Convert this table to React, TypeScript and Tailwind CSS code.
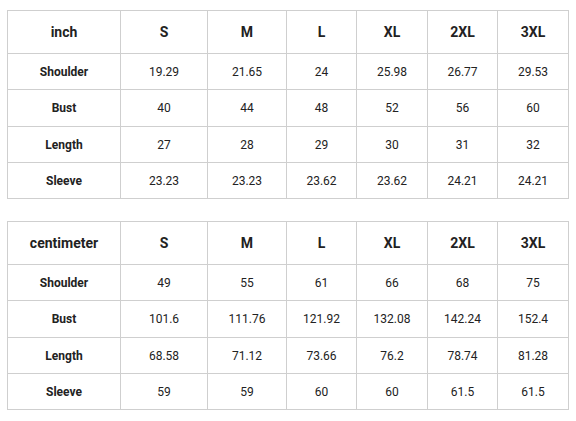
import React from "react";

const sizes = ["S", "M", "L", "XL", "2XL", "3XL"];

const inchRows: [string, string[]][] = [
  ["Shoulder", ["19.29", "21.65", "24", "25.98", "26.77", "29.53"]],
  ["Bust", ["40", "44", "48", "52", "56", "60"]],
  ["Length", ["27", "28", "29", "30", "31", "32"]],
  ["Sleeve", ["23.23", "23.23", "23.62", "23.62", "24.21", "24.21"]],
];

const cmRows: [string, string[]][] = [
  ["Shoulder", ["49", "55", "61", "66", "68", "75"]],
  ["Bust", ["101.6", "111.76", "121.92", "132.08", "142.24", "152.4"]],
  ["Length", ["68.58", "71.12", "73.66", "76.2", "78.74", "81.28"]],
  ["Sleeve", ["59", "59", "60", "60", "61.5", "61.5"]],
];

const rowHeights = ["h-[36px]", "h-[37px]", "h-[36px]", "h-[36px]"];

function SizeTable({ unit, rows }: { unit: string; rows: [string, string[]][] }) {
  return (
    <table className="border-collapse table-fixed w-[561px] text-[#222]">
      <colgroup>
        <col className="w-[113px]" />
        <col className="w-[87px]" />
        <col className="w-[79px]" />
        <col className="w-[70px]" />
        <col className="w-[71px]" />
        <col className="w-[70px]" />
        <col className="w-[71px]" />
      </colgroup>
      <thead>
        <tr className="h-[43px]">
          <th className="border border-[#cfcfcf] text-[14px] font-bold text-center">{unit}</th>
          {sizes.map((s) => (
            <th key={s} className="border border-[#cfcfcf] text-[14px] font-bold text-center">
              {s}
            </th>
          ))}
        </tr>
      </thead>
      <tbody>
        {rows.map(([label, vals], i) => (
          <tr key={label} className={rowHeights[i]}>
            <td className="border border-[#cfcfcf] text-[12px] font-bold text-center">{label}</td>
            {vals.map((v, j) => (
              <td key={j} className="border border-[#cfcfcf] text-[12px] text-center">
                {v}
              </td>
            ))}
          </tr>
        ))}
      </tbody>
    </table>
  );
}

export default function App() {
  return (
    <div className="w-[576px] h-[421px] bg-white pl-[7px] pt-[10px] font-['Roboto',sans-serif]">
      <SizeTable unit="inch" rows={inchRows} />
      <div className="h-[22px]" />
      <SizeTable unit="centimeter" rows={cmRows} />
    </div>
  );
}
